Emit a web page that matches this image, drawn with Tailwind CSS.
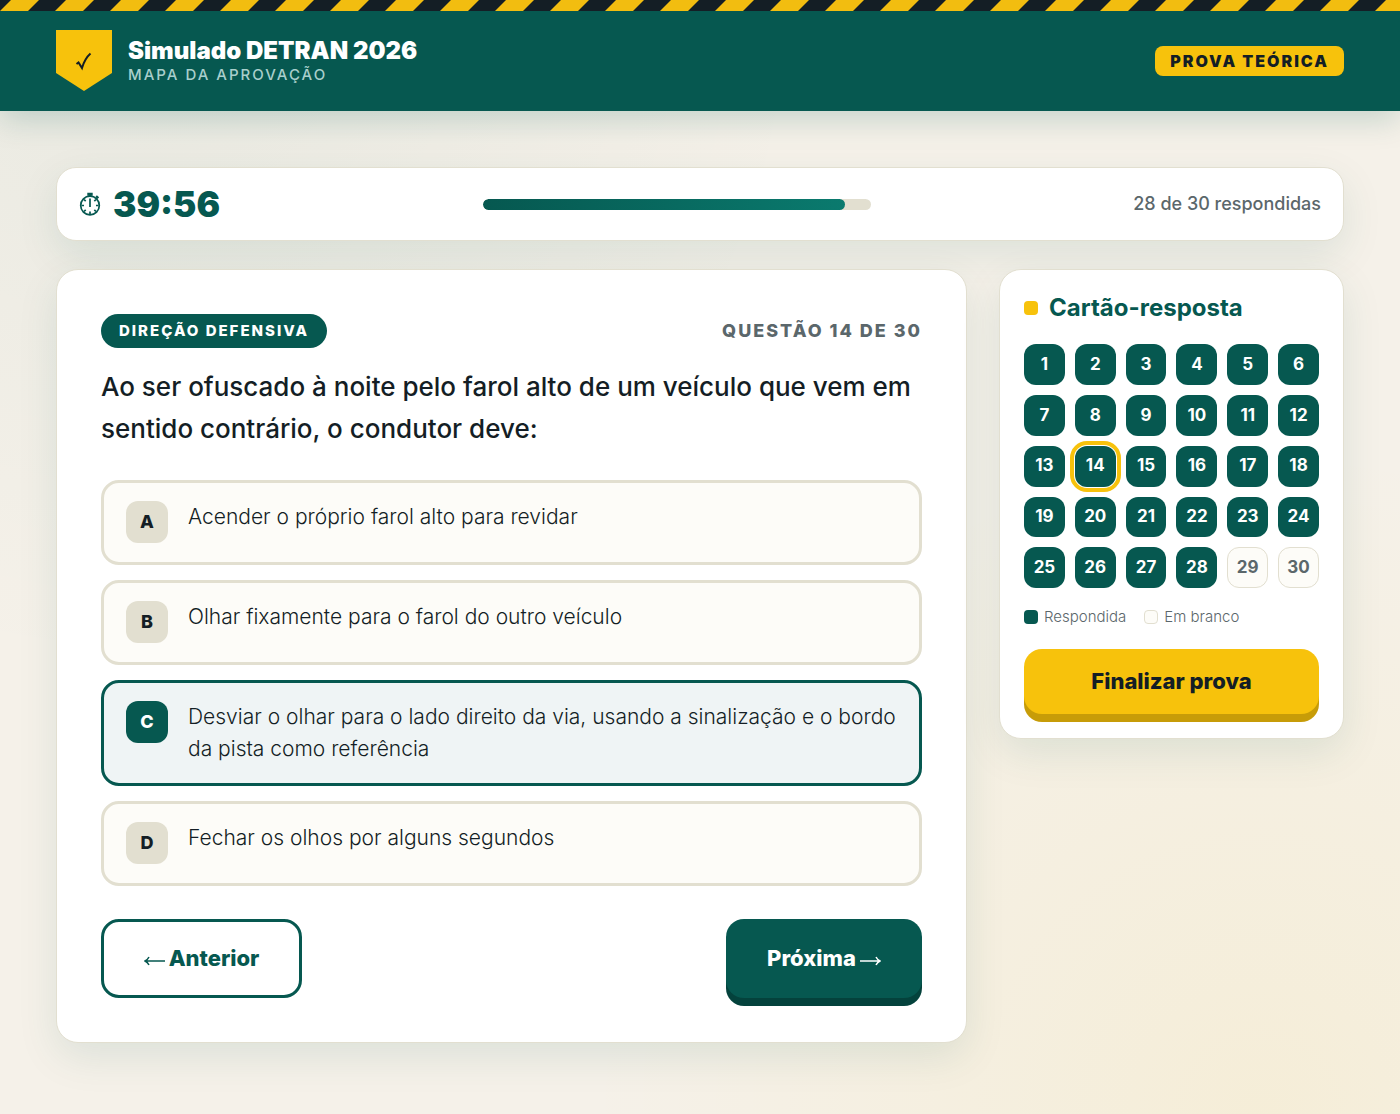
<!DOCTYPE html>
<html lang="pt-BR">
<head>
    <meta charset="UTF-8">
    <meta name="viewport" content="width=device-width, initial-scale=1.0">
    <title>Simulado DETRAN 2026 | Mapa da Aprovação</title>
    <script src="https://cdn.jsdelivr.net/npm/@tailwindcss/browser@4"></script>
</head>
<body class="min-h-screen bg-[#f5f1e9] bg-[radial-gradient(circle_at_10%_0%,rgba(6,88,80,0.05),transparent_40%),radial-gradient(circle_at_90%_100%,rgba(247,194,12,0.08),transparent_40%)] font-['Inter','Liberation_Sans',sans-serif] text-[#141e25]">

    <!-- Header -->
    <header class="bg-[#065850] shadow-[0_8px_30px_rgba(6,88,80,0.2)]">
        <svg class="block w-full h-[11px]" aria-hidden="true">
            <defs>
                <pattern id="stripes" width="55" height="11" patternUnits="userSpaceOnUse">
                    <rect width="55" height="11" fill="#141e25"/>
                    <path d="M11 0H39L28 11H0Z" fill="#f2bd10"/>
                </pattern>
            </defs>
            <rect width="100%" height="11" fill="url(#stripes)"/>
        </svg>
        <div class="flex items-center justify-between px-14 h-[100px]">
            <div class="flex items-center gap-4">
                <svg class="w-14 h-[62px]" viewBox="0 0 56 62" aria-hidden="true">
                    <path d="M0 0H56V43L28 61L0 43Z" fill="#f7c20c"/>
                    <path d="M20.500 34L22.500 32.500L26 38C27.500 33 30.500 27 34.500 23.500" fill="none" stroke="#141e25" stroke-width="2"/>
                </svg>
                <div>
                    <h1 class="text-2xl leading-7 font-black text-white">Simulado DETRAN 2026</h1>
                    <p class="text-[15px] leading-5 font-medium tracking-[2px] text-[#a9cfcc]">MAPA DA APROVAÇÃO</p>
                </div>
            </div>
            <span class="rounded-lg bg-[#f7c20c] px-[15px] py-1 text-base leading-[22px] font-black tracking-[2px]">PROVA TEÓRICA</span>
        </div>
    </header>

    <main class="px-14 pt-14 pb-[71px]">
        <!-- Timer and progress -->
        <section class="flex items-center justify-between h-[74px] px-[22px] mb-7 rounded-[20px] border border-[#e2dfd0] bg-white shadow-[0_14px_40px_rgba(6,88,80,0.1)]">
            <div class="flex items-center gap-3 text-[#065850]">
                <svg class="w-[22px] h-6" viewBox="0 0 22 24" fill="none" stroke="currentColor" aria-hidden="true">
                    <circle cx="11" cy="13.500" r="9.300" stroke-width="1.700"/>
                    <path d="M11 3V5M8.300 2.300H13.700M17.500 6L19 4.300" stroke-width="3"/>
                    <path d="M11 6.500V15M11 19.500V22M2.500 13.500H5M17 13.500H19.500M5 7.500L6.700 9.200M17 7.500L15.300 9.200M5 19.500L6.700 17.800M17 19.500L15.300 17.800" stroke-width="1.700"/>
                </svg>
                <span id="timer" class="text-[35px] leading-10 font-black">39:56</span>
            </div>
            <div role="progressbar" aria-label="Progresso" aria-valuenow="28" aria-valuemin="0" aria-valuemax="30" class="w-[388px] h-[11px] rounded-full bg-[#e2dfd0] overflow-hidden">
                <div id="bar" class="h-full rounded-full bg-linear-to-r from-[#065850] to-[#0a7a6e]" style="width: 93.3%"></div>
            </div>
            <span id="count" class="text-lg font-medium text-[#5b676b]">28 de 30 respondidas</span>
        </section>

        <div class="grid grid-cols-[minmax(0,1fr)_345px] gap-8 items-start">
            <!-- Question -->
            <section class="rounded-[22px] border border-[#e2dfd0] bg-white p-11 shadow-[0_14px_40px_rgba(6,88,80,0.1)]">
                <div class="flex items-center justify-between mb-[18px]">
                    <span class="rounded-full bg-[#065850] px-[18px] py-1.5 text-[15px] leading-[22px] font-extrabold tracking-[2px] text-white">DIREÇÃO DEFENSIVA</span>
                    <span class="text-lg leading-[22px] font-extrabold tracking-[2px] text-[#5b676b]">QUESTÃO 14 DE 30</span>
                </div>

                <h2 class="mb-[30px] text-[26px] leading-[42px] font-medium">Ao ser ofuscado à noite pelo farol alto de um veículo que vem em sentido contrário, o condutor deve:</h2>

                <form id="options" class="flex flex-col gap-[15px] mb-[33px]">
                    <label class="group flex items-start gap-5 min-h-[85px] rounded-[18px] border-3 border-[#e2dfd0] bg-[#fdfcf8] px-[22px] py-[18px] cursor-pointer has-checked:border-[#065850] has-checked:bg-[#eff4f5]">
                        <input type="radio" name="answer" value="A" class="sr-only">
                        <span class="flex shrink-0 items-center justify-center size-[42px] rounded-xl bg-[#e2dfd0] text-lg font-extrabold group-has-checked:bg-[#065850] group-has-checked:text-white">A</span>
                        <span class="text-[21px] leading-8 font-light">Acender o próprio farol alto para revidar</span>
                    </label>
                    <label class="group flex items-start gap-5 min-h-[85px] rounded-[18px] border-3 border-[#e2dfd0] bg-[#fdfcf8] px-[22px] py-[18px] cursor-pointer has-checked:border-[#065850] has-checked:bg-[#eff4f5]">
                        <input type="radio" name="answer" value="B" class="sr-only">
                        <span class="flex shrink-0 items-center justify-center size-[42px] rounded-xl bg-[#e2dfd0] text-lg font-extrabold group-has-checked:bg-[#065850] group-has-checked:text-white">B</span>
                        <span class="text-[21px] leading-8 font-light">Olhar fixamente para o farol do outro veículo</span>
                    </label>
                    <label class="group flex items-start gap-5 min-h-[85px] rounded-[18px] border-3 border-[#e2dfd0] bg-[#fdfcf8] px-[22px] py-[18px] cursor-pointer has-checked:border-[#065850] has-checked:bg-[#eff4f5]">
                        <input type="radio" name="answer" value="C" class="sr-only" checked>
                        <span class="flex shrink-0 items-center justify-center size-[42px] rounded-xl bg-[#e2dfd0] text-lg font-extrabold group-has-checked:bg-[#065850] group-has-checked:text-white">C</span>
                        <span class="text-[21px] leading-8 font-light">Desviar o olhar para o lado direito da via, usando a sinalização e o bordo da pista como referência</span>
                    </label>
                    <label class="group flex items-start gap-5 min-h-[85px] rounded-[18px] border-3 border-[#e2dfd0] bg-[#fdfcf8] px-[22px] py-[18px] cursor-pointer has-checked:border-[#065850] has-checked:bg-[#eff4f5]">
                        <input type="radio" name="answer" value="D" class="sr-only">
                        <span class="flex shrink-0 items-center justify-center size-[42px] rounded-xl bg-[#e2dfd0] text-lg font-extrabold group-has-checked:bg-[#065850] group-has-checked:text-white">D</span>
                        <span class="text-[21px] leading-8 font-light">Fechar os olhos por alguns segundos</span>
                    </label>
                </form>

                <div class="flex items-center justify-between">
                    <button type="button" class="flex items-center justify-center gap-1 min-w-[201px] h-[79px] rounded-[18px] border-3 border-[#065850] bg-white text-[22px] font-extrabold text-[#065850] cursor-pointer">
                        <svg class="w-[21px] h-3 mt-1" viewBox="0 0 21 12" fill="none" stroke="currentColor" stroke-width="1.500" aria-hidden="true">
                            <path d="M21 6H1M5 2C4 4 3 5 1 6C3 7 4 8 5 10"/>
                        </svg>
                        Anterior
                    </button>
                    <button type="button" class="flex items-center justify-center gap-1 min-w-[196px] h-[79px] rounded-[18px] bg-[#065850] text-[22px] font-extrabold text-white shadow-[0_8px_0_#04423c] cursor-pointer">
                        Próxima
                        <svg class="w-[21px] h-3 mt-1" viewBox="0 0 21 12" fill="none" stroke="currentColor" stroke-width="1.500" aria-hidden="true">
                            <path d="M0 6H20M16 2C17 4 18 5 20 6C18 7 17 8 16 10"/>
                        </svg>
                    </button>
                </div>
            </section>

            <!-- Answer sheet -->
            <aside class="rounded-[22px] border border-[#e2dfd0] bg-white p-6 shadow-[0_14px_40px_rgba(6,88,80,0.1)]">
                <h2 class="flex items-center gap-[11px] mb-[22px] text-2xl leading-7 font-bold text-[#065850]">
                    <span class="size-3.5 rounded bg-[#f7c20c]"></span>
                    Cartão-resposta
                </h2>

                <div id="sheet" class="grid grid-cols-6 gap-2.5 mb-[19px]"></div>

                <div class="flex gap-[18px] mb-[22px] text-[15px] leading-5 font-light text-[#5b676b]">
                    <span class="flex items-center gap-1.5"><span class="size-3.5 rounded bg-[#065850]"></span>Respondida</span>
                    <span class="flex items-center gap-1.5"><span class="size-3.5 rounded border border-[#e2dfd0] bg-[#fdfcf8]"></span>Em branco</span>
                </div>

                <button type="button" class="block w-full h-[65px] rounded-[18px] bg-[#f7c20c] text-[22px] font-extrabold shadow-[0_8px_0_#c79c08] cursor-pointer">Finalizar prova</button>
            </aside>
        </div>
    </main>

    <script>
        const total = 30;
        const answered = 28;
        const current = 14;

        const base = 'aspect-square rounded-xl text-[17px] font-bold cursor-pointer';
        const done = 'bg-[#065850] text-white';
        const blank = 'border border-[#e2dfd0] bg-[#fdfcf8] text-[#5b676b]';
        const active = 'outline-4 outline-offset-1 outline-[#f7c20c]';

        // Build the answer sheet
        const sheet = document.getElementById('sheet');
        for (let i = 1; i <= total; i++) {
            const btn = document.createElement('button');
            btn.type = 'button';
            btn.textContent = i;
            btn.className = base + ' ' + (i <= answered ? done : blank) + (i === current ? ' ' + active : '');
            sheet.appendChild(btn);
        }
    </script>
</body>
</html>
